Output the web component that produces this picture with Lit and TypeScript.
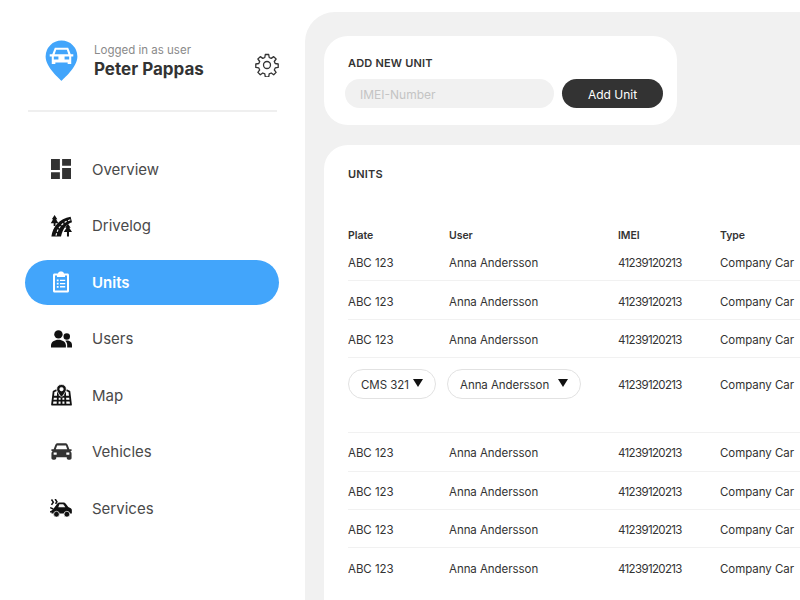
import { LitElement, html, css, svg } from "lit";
import { customElement } from "lit/decorators.js";

const icons: Record<string, unknown> = {
  overview: svg`<svg class="ic" viewBox="3 3 18 18" width="20" height="20"><path fill="#333" d="M3 13h8V3H3v10zm0 8h8v-6H3v6zm10 0h8V11h-8v10zm0-18v6h8V3h-8z"/></svg>`,
  drivelog: svg`<svg class="ic" viewBox="0 0 24 24" width="22" height="22"><path fill="#111" d="M1.500 23.500 C3 13 10 4 22.500 2 L24 8 C18 10 14 15 12 23.500 Z"/><path fill="none" stroke="#fff" stroke-width="1.200" stroke-dasharray="2.600 1.800" d="M6.500 22.500 C8.500 14 13 8.500 22.500 5"/><path fill="#111" d="M5 0 L8 4.500 H6.600 L9.200 9 H6 V12 H4 V9 H0.800 L3.400 4.500 H2 Z"/><path fill="#111" d="M19.500 9.500 L22.500 14 H21 L24 18.500 H20.700 V23.500 H18.500 V18.500 H15 L18 14 H16.500 Z"/></svg>`,
  units: svg`<svg class="ic" viewBox="0 0 24 24" width="24" height="24"><path fill="#fff" fill-rule="evenodd" d="M5.500 3.500H9C9.300 2 10.500 1.500 12 1.500S14.700 2 15 3.500H18.500C19.400 3.500 20 4.100 20 5V21C20 21.900 19.400 22.500 18.500 22.500H5.500C4.600 22.500 4 21.900 4 21V5C4 4.100 4.600 3.500 5.500 3.500ZM6 5.500V20.500H18V5.500H16V7H8V5.500Z"/><path fill="#fff" d="M7.800 9.500h1.800v1.800H7.800zM11 9.700h5.200v1.300H11zM7.800 12.700h1.800v1.800H7.800zM11 12.900h5.200v1.300H11zM7.800 15.900h1.800v1.800H7.800zM11 16.100h5.200v1.300H11z"/></svg>`,
  users: svg`<svg class="ic" viewBox="0 0 24 20" width="21" height="17.500"><circle cx="8.500" cy="5" r="4.800" fill="#111"/><circle cx="18" cy="7.500" r="3.700" fill="#111"/><path fill="#111" d="M0 17.500C0 13.500 4 11 8.500 11S17 13.500 17 17.500V20H0Z"/><path fill="#111" d="M18 12C21.500 12 24 14 24 17V20H18.500V17C18.500 15.300 17.800 13.600 16.300 12.200 16.900 12.100 17.400 12 18 12Z"/></svg>`,
  map: svg`<svg class="ic" viewBox="0 0 24 25" width="21" height="22"><g fill="none" stroke="#111" stroke-width="2.100" stroke-linejoin="round"><path d="M6.500 7 3 8.500 1.200 23.500H22.800L21 8.500 17.500 7"/><path d="M2.500 14.500H21.500M2 19H22M8 9 7.500 23.500M16 9 16.500 23.500M12 14 12 23.500"/></g><path fill="#111" stroke="#fff" stroke-width=".8" fill-rule="evenodd" d="M12 0.500C8.700 0.500 6.500 2.800 6.500 5.800 6.500 9 12 15 12 15S17.500 9 17.500 5.800C17.500 2.800 15.300 0.500 12 0.500ZM12 3.800A2 2 0 1 1 12 7.800 2 2 0 0 1 12 3.800Z"/></svg>`,
  vehicles: svg`<svg class="ic" viewBox="0 0 24 19" width="21" height="17"><path fill="#333" d="M5 1.800C5.400.7 6.300 0 7.500 0h9c1.200 0 2.100.7 2.500 1.800L21 7h2.500v2H22c.9.7 1.500 1.800 1.500 3v5c0 1.100-.9 2-2 2h-1.500c-1.100 0-2-.9-2-2v-1H6v1c0 1.100-.9 2-2 2H2.500c-1.100 0-2-.9-2-2v-5c0-1.200.6-2.300 1.500-3H.5V7H3zM7 2.500 5.500 7h13L17 2.500zM3 10.500v2.700h3.500v-2.700zM17.500 10.500v2.700H21v-2.700z" fill-rule="evenodd"/></svg>`,
  services: svg`<svg class="ic" viewBox="0 0 24 21" width="22" height="19"><path fill="#111" d="M3.500 11 8 5C8.600 4.200 9.400 3.800 10.300 3.800H14.500C15.700 3.800 16.600 4.300 17.300 5.200L20 8.800 22.800 10.300C23.600 10.800 24 11.500 24 12.500V16H1.500V13Z"/><circle cx="7" cy="16.800" r="3.200" fill="#111" stroke="#fff" stroke-width=".8"/><circle cx="18.500" cy="16.800" r="3.200" fill="#111" stroke="#fff" stroke-width=".8"/><path fill="#fff" d="M10.200 5.800H14.500L16.800 9H9Z" opacity=".95"/><path fill="none" stroke="#111" stroke-width="1.700" d="M1.500 0.500 3.500 3.500 1.500 6.500M5.500 0 7.500 3 6 5.500M0 9.500 3.500 11M0 14.500 2.500 13.500"/></svg>`,
};

const nav = [
  ["overview", "Overview"],
  ["drivelog", "Drivelog"],
  ["units", "Units"],
  ["users", "Users"],
  ["map", "Map"],
  ["vehicles", "Vehicles"],
  ["services", "Services"],
];

@customElement("app-root")
export class AppRoot extends LitElement {
  static styles = css`
    :host {
      display: grid;
      grid-template-columns: 305px 1fr;
      width: 800px;
      height: 600px;
      overflow: hidden;
      background: #fff;
      color: #333;
      font-family: Inter, "Noto Sans", sans-serif;
    }
    .side {
      display: flex;
      flex-direction: column;
      padding: 40px 26px 0 25px;
    }
    .profile {
      display: flex;
      align-items: flex-start;
      margin: 0 0 0 20px;
      height: 70px;
    }
    .pin { flex: none; margin-right: 16px; }
    .who { flex: 1; padding-top: 3px; }
    .who small { display: block; font-size: 11.500px; line-height: 15px; color: #8a8a8a; }
    .who b { display: block; font-size: 17px; line-height: 22px; font-weight: 700; color: #333; }
    .gear { flex: none; margin: 13px 0.500px 0 0; }
    .rule { height: 2px; background: #efefef; margin: 0 2px 0 3px; }
    nav { display: flex; flex-direction: column; margin-top: 34.500px; }
    .item {
      display: grid;
      grid-template-columns: 67px 1fr;
      align-items: center;
      height: 45px;
      margin-bottom: 11.600px;
      border-radius: 23px;
      font-size: 15px;
      color: #4a4a4a;
    }
    .item.active { background: #42a5fb; color: #fff; font-weight: 600; }
    .cell { display: grid; place-items: center; width: 72px; }
    .ic { display: block; }
    main {
      background: #f1f1f1;
      margin-top: 12px;
      border-radius: 30px 0 0 0;
      padding: 24px 0 0 19px;
      display: flex;
      flex-direction: column;
      gap: 20px;
      overflow: hidden;
    }
    .add {
      width: 353px;
      height: 89px;
      box-sizing: border-box;
      background: #fff;
      border-radius: 24px;
      padding: 20px 14px 0 21px;
    }
    h2 { margin: 0 0 0 3px; font-size: 11px; line-height: 14px; font-weight: 600; letter-spacing: 0.200px; color: #333; }
    .form { display: grid; grid-template-columns: 209px 101px; gap: 8px; margin-top: 9px; }
    .imei {
      height: 29px;
      border-radius: 15px;
      background: #f1f1f1;
      color: #c4c4c4;
      font-size: 12px;
      line-height: 31px;
      padding-left: 15px;
    }
    .btn {
      height: 29px;
      border-radius: 15px;
      background: #333;
      color: #fff;
      font-size: 12px;
      line-height: 31px;
      text-align: center;
    }
    .units {
      width: 620px;
      flex: 1;
      background: #fff;
      border-radius: 24px 0 0 0;
      padding: 22px 0 0 24px;
    }
    .units h2 { margin-left: 0; }
    .grid { margin-top: 46px; }
    .row {
      display: grid;
      grid-template-columns: 101px 169px 102px 1fr;
      align-items: center;
      height: 38.400px;
      padding-top: 3px;
      box-sizing: border-box;
      border-bottom: 1px solid #f1f1f1;
      font-size: 11.500px;
      letter-spacing: -0.050px;
      color: #333;
    }
    .row.last { border-bottom: 0; }
    .row.head { height: 16px; padding-top: 0; border: 0; font-weight: 600; font-size: 10.500px; }
    .row.edit { height: 75px; align-items: flex-start; padding-top: 11px; }
    .row.edit > span { margin-top: 9px; }
    .num { letter-spacing: -0.650px; }
    .sel {
      display: inline-flex;
      align-items: center;
      justify-content: space-between;
      box-sizing: border-box;
      height: 30px;
      border: 1px solid #e2e2e2;
      border-radius: 15px;
      padding: 1px 12px 0;
    }
    .sel.a { width: 88px; }
    .sel.b { width: 134px; margin-left: -2px; }
    .tri { width: 0; height: 0; border-left: 5px solid transparent; border-right: 5px solid transparent; border-top: 8px solid #111; margin-bottom: 3px; }
  `;

  row(last = false) {
    return html`<div class="row ${last ? "last" : ""}">
      <span>ABC 123</span><span>Anna Andersson</span><span class="num">41239120213</span><span>Company Car</span>
    </div>`;
  }

  render() {
    return html`
      <aside class="side">
        <div class="profile">
          <svg class="pin" viewBox="0 0 32 40" width="33" height="41">
            <path fill="#42a5fb" d="M16 40C15 38 0.500 27 0.500 16A15.500 15.500 0 0 1 31.500 16C31.500 27 17 38 16 40Z"/>
            <path fill="#fff" fill-rule="evenodd" d="M9.500 7.500H22.500L25 14H27.500V16H25.500V23.500H22V22H10V23.500H6.500V16H4.500V14H7ZM10.800 9.500 9.300 14H22.700L21.200 9.500ZM8.500 16V19H13V16Z M19 16V19H23.500V16Z"/>
          </svg>
          <div class="who"><small>Logged in as user</small><b>Peter Pappas</b></div>
          <svg class="gear" viewBox="0 0 24 24" width="24" height="24" fill="none" stroke="#333" stroke-width="1.300" stroke-linejoin="round">
            <circle cx="12" cy="12" r="3.500"/>
            <path d="M10.300 1.500h3.400l.5 3 2 .9 2.500-1.800 2.400 2.400-1.800 2.500.9 2 3 .5v3.400l-3 .5-.9 2 1.800 2.500-2.400 2.400-2.500-1.800-2 .9-.5 3h-3.400l-.5-3-2-.9-2.500 1.800-2.400-2.400 1.800-2.500-.9-2-3-.5v-3.400l3-.5.9-2-1.800-2.500 2.400-2.400 2.500 1.800 2-.9z"/>
          </svg>
        </div>
        <div class="rule"></div>
        <nav>
          ${nav.map(([ic, label]) => html`<div class="item ${label === "Units" ? "active" : ""}"><span class="cell">${icons[ic]}</span><span>${label}</span></div>`)}
        </nav>
      </aside>
      <main>
        <section class="add">
          <h2>ADD NEW UNIT</h2>
          <div class="form"><div class="imei">IMEI-Number</div><div class="btn">Add Unit</div></div>
        </section>
        <section class="units">
          <h2>UNITS</h2>
          <div class="grid">
            <div class="row head"><span>Plate</span><span>User</span><span>IMEI</span><span>Type</span></div>
            ${this.row()}${this.row()}${this.row()}
            <div class="row edit">
              <div><div class="sel a">CMS 321<i class="tri"></i></div></div>
              <div><div class="sel b">Anna Andersson<i class="tri"></i></div></div>
              <span class="num">41239120213</span><span>Company Car</span>
            </div>
            ${this.row()}${this.row()}${this.row()}${this.row(true)}
          </div>
        </section>
      </main>
    `;
  }
}
